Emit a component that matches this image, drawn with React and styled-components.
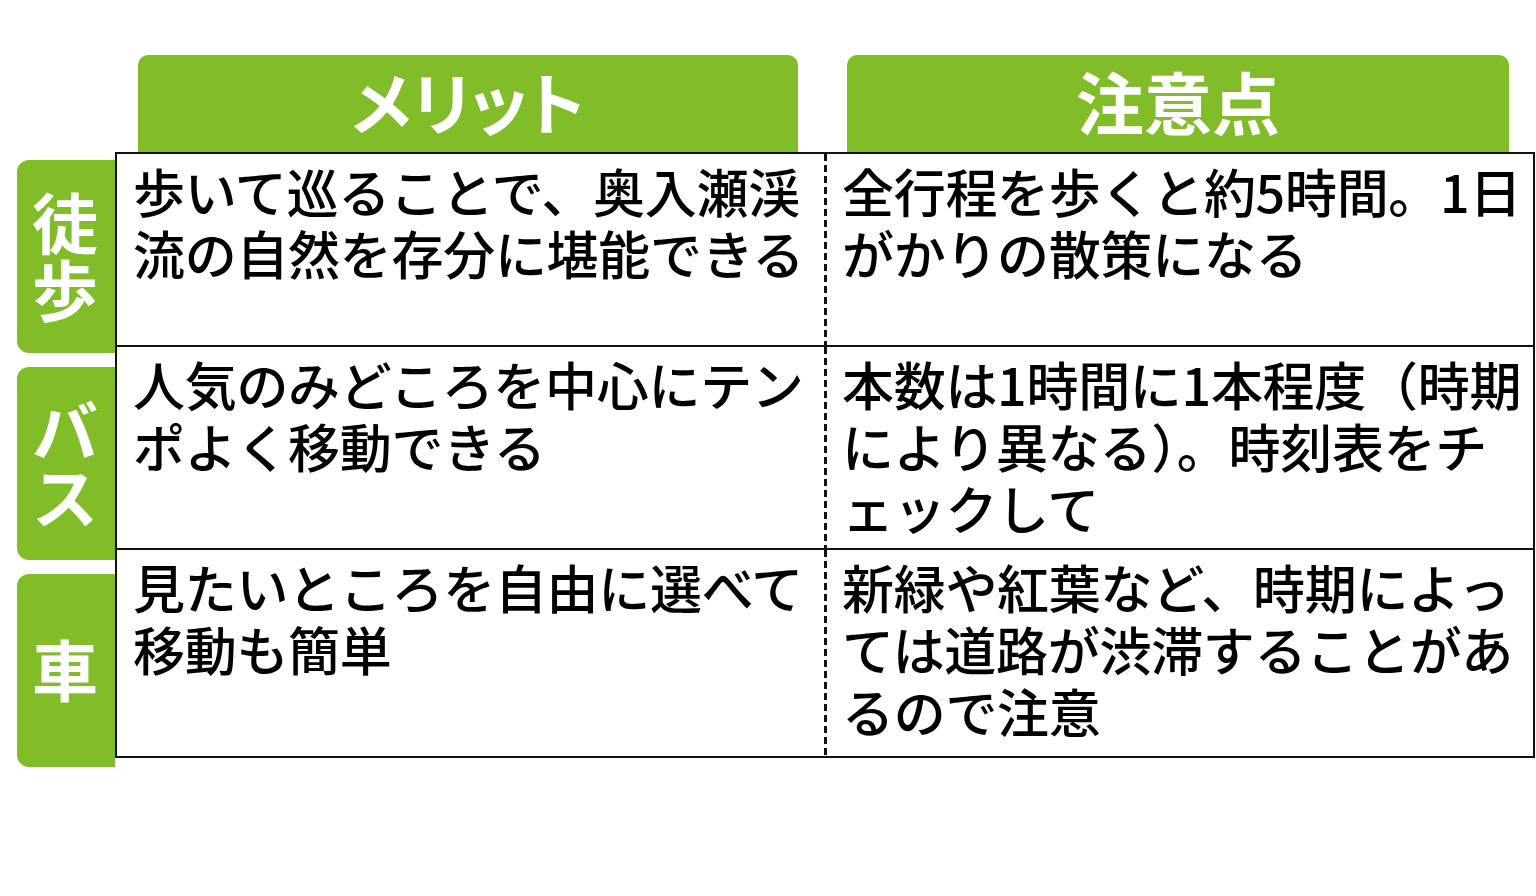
import React from 'react'
import styled, { createGlobalStyle } from 'styled-components'

const GlobalStyle = createGlobalStyle`
  html, body {
    margin: 0;
    padding: 0;
    background: #ffffff;
  }
  body {
    font-family: "Noto Sans CJK JP", "Noto Sans", sans-serif;
    color: #000;
  }
`

const GREEN = '#80bd28'

const rows = [
  {
    label: ['徒', '歩'],
    height: 195,
    merit: ['歩いて巡ることで、奥入瀬渓', '流の自然を存分に堪能できる'],
    caution: ['全行程を歩くと約5時間。1日', 'がかりの散策になる'],
  },
  {
    label: ['バ', 'ス'],
    height: 205,
    merit: ['人気のみどころを中心にテン', 'ポよく移動できる'],
    caution: ['本数は1時間に1本程度（時期', 'により異なる）。時刻表をチ', 'ェックして'],
  },
  {
    label: ['車'],
    height: 208,
    merit: ['見たいところを自由に選べて', '移動も簡単'],
    caution: ['新緑や紅葉など、時期によっ', 'ては道路が渋滞することがあ', 'るので注意'],
  },
]

const App = () => {
  return (
    <>
      <GlobalStyle />
      <STPage>
        <div />
        <HeaderRow>
          <Tab>メリット</Tab>
          <Tab>注意点</Tab>
        </HeaderRow>
        <SideColumn>
          {rows.map((r, i) => (
            <SideLabel key={i}>
              {r.label.map((c) => (
                <span key={c}>{c}</span>
              ))}
            </SideLabel>
          ))}
        </SideColumn>
        <Table>
          {rows.map((r, i) => (
            <Row key={i} $h={r.height} $last={i === rows.length - 1}>
              <Cell>
                {r.merit.map((l) => (
                  <div key={l}>{l}</div>
                ))}
              </Cell>
              <Cell $right>
                {r.caution.map((l) => (
                  <div key={l}>{l}</div>
                ))}
              </Cell>
            </Row>
          ))}
        </Table>
      </STPage>
    </>
  )
}

const STPage = styled.div`
  display: grid;
  grid-template-columns: 98px 1420px;
  align-items: start;
  padding: 55px 0 0 17px;
`

const HeaderRow = styled.div`
  display: grid;
  grid-template-columns: 709px 711px;
`

const Tab = styled.div`
  height: 97px;
  margin: 0 26px 0 23px;
  background: ${GREEN};
  border-radius: 10px 10px 0 0;
  color: #fff;
  font-weight: 700;
  font-size: 68px;
  font-feature-settings: "palt";
  display: flex;
  align-items: center;
  justify-content: center;
  line-height: 1;
  padding-bottom: 6px;
  box-sizing: border-box;
`

const SideColumn = styled.div`
  display: flex;
  flex-direction: column;
  gap: 14px;
  padding-top: 8px;
`

const SideLabel = styled.div`
  height: 193px;
  background: ${GREEN};
  border-radius: 12px 0 0 12px;
  color: #fff;
  font-weight: 700;
  font-size: 66px;
  line-height: 67px;
  display: flex;
  flex-direction: column;
  align-items: center;
  justify-content: center;
  padding: 0 2px 6px 0;
  box-sizing: border-box;
`

const Table = styled.div`
  border: 2.5px solid #111;
  display: flex;
  flex-direction: column;
`

const Row = styled.div`
  display: grid;
  grid-template-columns: 707px 1fr;
  height: ${(p) => p.$h - 2}px;
  border-bottom: ${(p) => (p.$last ? 'none' : '2.5px solid #111')};
  box-sizing: border-box;
`

const Cell = styled.div`
  padding: 6px 0 0 ${(p) => (p.$right ? '18px' : '16px')};
  font-size: 52px;
  font-weight: 500;
  line-height: 62px;
  letter-spacing: -0.3px;
  white-space: nowrap;
  overflow: hidden;
  ${(p) =>
    p.$right
      ? `
    background-image: linear-gradient(#111 62%, transparent 62%);
    background-size: 3px 11px;
    background-repeat: repeat-y;
    background-position: left top;
  `
      : ''}
`

export default App
